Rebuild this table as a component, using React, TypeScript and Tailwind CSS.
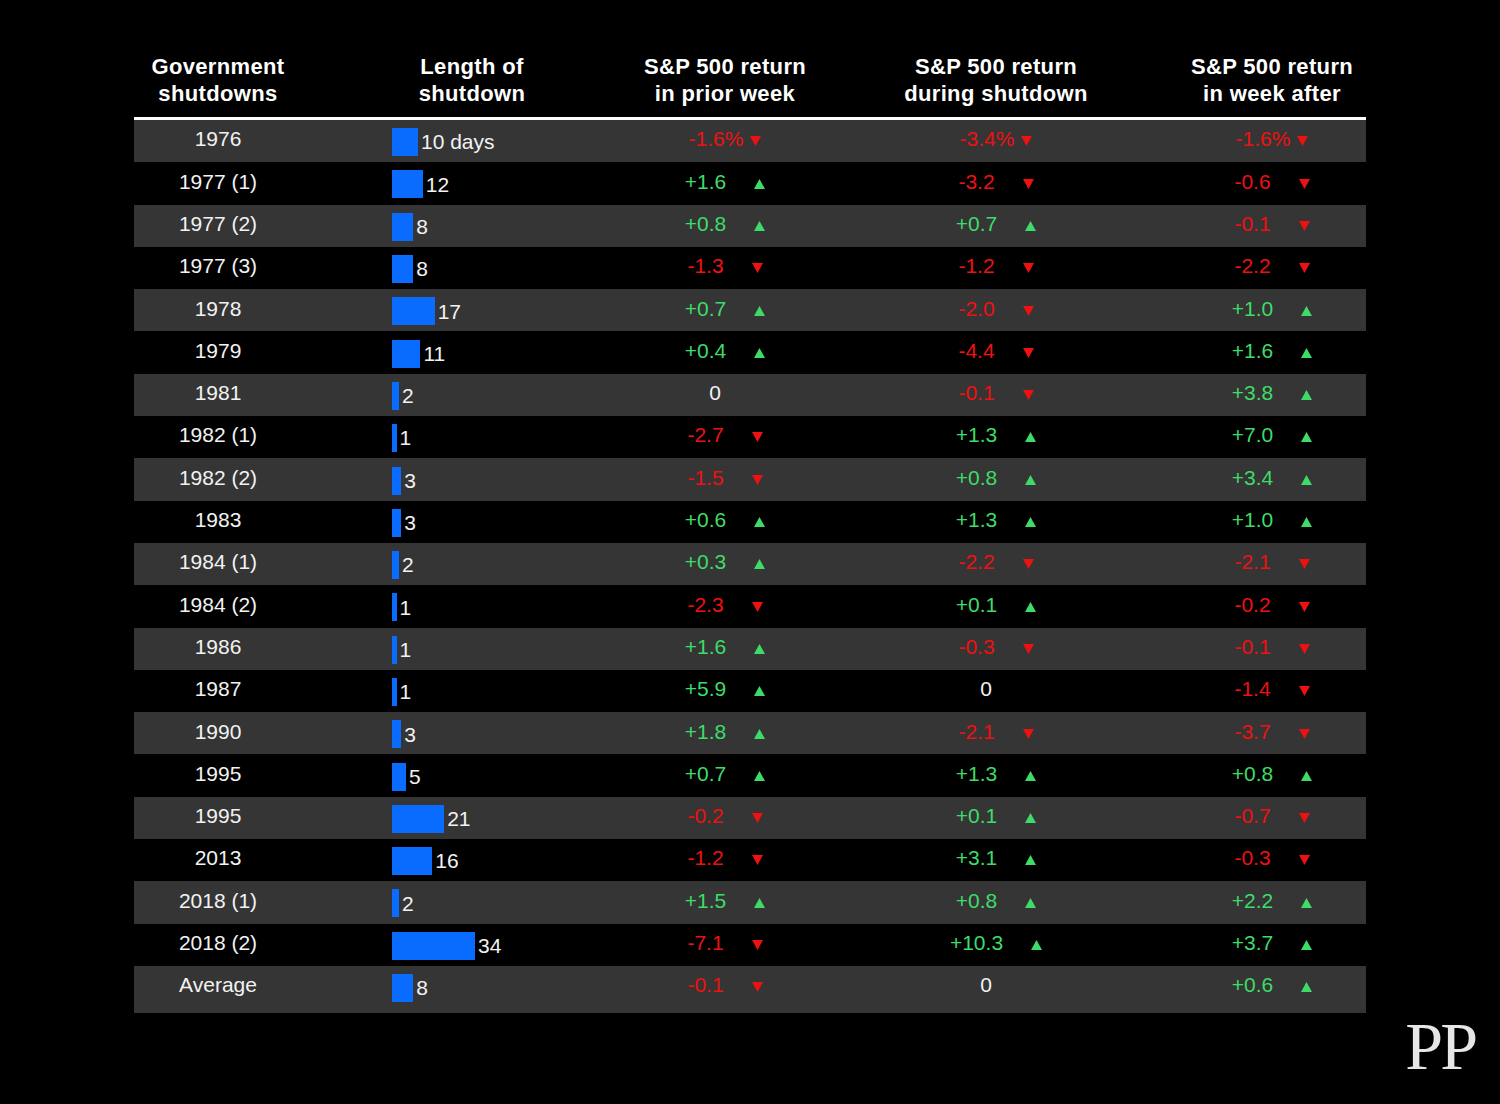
import React from "react";

type Row = [string, number, string, string, string];

const rows: Row[] = [
  ["1976", 10, "-1.6%", "-3.4%", "-1.6%"],
  ["1977 (1)", 12, "+1.6", "-3.2", "-0.6"],
  ["1977 (2)", 8, "+0.8", "+0.7", "-0.1"],
  ["1977 (3)", 8, "-1.3", "-1.2", "-2.2"],
  ["1978", 17, "+0.7", "-2.0", "+1.0"],
  ["1979", 11, "+0.4", "-4.4", "+1.6"],
  ["1981", 2, "0", "-0.1", "+3.8"],
  ["1982 (1)", 1, "-2.7", "+1.3", "+7.0"],
  ["1982 (2)", 3, "-1.5", "+0.8", "+3.4"],
  ["1983", 3, "+0.6", "+1.3", "+1.0"],
  ["1984 (1)", 2, "+0.3", "-2.2", "-2.1"],
  ["1984 (2)", 1, "-2.3", "+0.1", "-0.2"],
  ["1986", 1, "+1.6", "-0.3", "-0.1"],
  ["1987", 1, "+5.9", "0", "-1.4"],
  ["1990", 3, "+1.8", "-2.1", "-3.7"],
  ["1995", 5, "+0.7", "+1.3", "+0.8"],
  ["1995", 21, "-0.2", "+0.1", "-0.7"],
  ["2013", 16, "-1.2", "+3.1", "-0.3"],
  ["2018 (1)", 2, "+1.5", "+0.8", "+2.2"],
  ["2018 (2)", 34, "-7.1", "+10.3", "+3.7"],
  ["Average", 8, "-0.1", "0", "+0.6"],
];

const Arrow = ({ up }: { up: boolean }) =>
  up ? (
    <svg width="11" height="10" viewBox="0 0 11 10" className="ml-[7px] inline-block fill-[#3ddc68]">
      <path d="M5.5 0 L11 10 L0 10 Z" />
    </svg>
  ) : (
    <svg width="11" height="10" viewBox="0 0 11 10" className="ml-[7px] inline-block fill-[#ee1111]">
      <path d="M0 0 L11 0 L5.5 10 Z" />
    </svg>
  );

function Value({ v, extra = "" }: { v: string; extra?: string }) {
  if (v === "0") {
    return (
      <div className={`flex items-center justify-center pb-[4px] ${extra}`}>
        <span className="text-[#f2f2f2]">0</span>
        <span className="w-[20px]" />
      </div>
    );
  }
  const up = v.startsWith("+");
  const pct = v.endsWith("%");
  return (
    <div className={`flex items-baseline justify-center pb-[4px] ${extra}`}>
      <span className={up ? "text-[#3ddc68]" : "text-[#ee1111]"}>{v}</span>
      {!pct && <span className="w-[21px]" />}
      <Arrow up={up} />
    </div>
  );
}

export default function App() {
  return (
    <div className="min-h-[1104px] w-full bg-black pl-[134px] font-['Liberation_Sans',Arial,sans-serif] text-[#f2f2f2]">
      <div className="w-[1232px]">
        {/* header */}
        <div className="grid h-[117px] grid-cols-[168px_340px_166px_376px_182px] items-end pb-[10px] text-center text-[22px] font-bold leading-[27px] tracking-[0.35px] text-white">
          <div>Government<br />shutdowns</div>
          <div>Length of<br />shutdown</div>
          <div>S&amp;P 500 return<br />in prior week</div>
          <div>S&amp;P 500 return<br />during shutdown</div>
          <div className="pr-[6px]">S&amp;P 500 return<br />in week after</div>
        </div>
        <div className="h-[3px] bg-white" />

        {rows.map((r, i) => {
          const last = i === rows.length - 1;
          return (
            <div
              key={i}
              className={`grid grid-cols-[168px_340px_166px_376px_182px] items-center text-[21px] ${
                i % 2 === 0 ? "bg-[#353535]" : "bg-black"
              } ${last ? "h-[47px] pb-[5px]" : "h-[42.3px]"}`}
            >
              <div className="pb-[4px] text-center">{r[0]}</div>
              <div className="flex items-center pl-[90px] pt-[2px]">
                <div className="h-[28px] bg-[#0a6cff]" style={{ width: `${2.38 * r[1] + 2.2}px` }} />
                <span className="ml-[3px]">{i === 0 ? "10 days" : r[1]}</span>
              </div>
              <Value v={r[2]} />
              <Value v={r[3]} />
              <Value v={r[4]} extra="pr-[6px]" />
            </div>
          );
        })}
      </div>
      <div className="-mt-[2px] flex justify-end pr-[25px]">
        <span className="font-['Liberation_Serif',serif] text-[68px] leading-[70px] tracking-[-3px] text-[#e6e6e6]">PP</span>
      </div>
    </div>
  );
}
